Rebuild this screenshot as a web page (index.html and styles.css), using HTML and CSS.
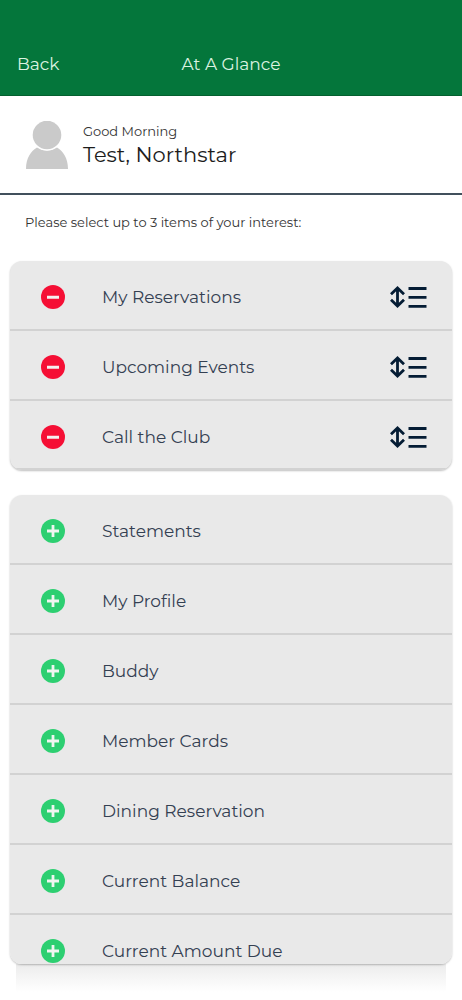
FILE: index.html
```html
<!DOCTYPE html>
<html lang="en">
<head>
  <meta charset="UTF-8" />
  <meta name="viewport" content="width=device-width, initial-scale=1.0">
  <title>At A Glance</title>
  <link rel="stylesheet" href="styles.css">
</head>
<body>
  <!-- shared icons -->
  <svg class="sprite" aria-hidden="true">
    <symbol id="icon-minus" viewBox="0 0 24 24">
      <circle cx="12" cy="12" r="12" fill="#f50f35"/>
      <path d="M6 12.3h12" stroke="#f4f0f0" stroke-width="3"/>
    </symbol>
    <symbol id="icon-plus" viewBox="0 0 24 24">
      <circle cx="12" cy="12" r="12" fill="#2dcf71"/>
      <path d="M6 12h12M12 6v12" stroke="#f0f5f1" stroke-width="2.8"/>
    </symbol>
    <symbol id="icon-sort" viewBox="0 0 38 24">
      <path d="M8.500 4v16M2 9.200L8.500 3l6.500 6.200M2 14.800L8.500 21l6.500-6.200" fill="none" stroke="#041c34" stroke-width="2.800"/>
      <path d="M19.500 3.500h18M19.500 12.300h18M19.500 21.300h18" stroke="#041c34" stroke-width="2.800"/>
    </symbol>
  </svg>

  <header class="top-bar">
    <a href="#" class="back">Back</a>
    <h1>At A Glance</h1>
  </header>

  <section class="user">
    <svg class="avatar" viewBox="0 0 44 48" aria-hidden="true">
      <path d="M1 48C1 37 6 30 12 26.500Q22 33 32 26.500C38 30 43 37 43 48Z" fill="#cacaca"/>
      <circle cx="22" cy="14" r="15.500" fill="#fff"/>
      <circle cx="22" cy="14" r="14.300" fill="#cacaca"/>
    </svg>
    <div>
      <p class="greeting">Good Morning</p>
      <p class="name">Test, Northstar</p>
    </div>
  </section>

  <main>
    <p class="hint">Please select up to 3 items of your interest:</p>

    <ul class="card">
      <li>
        <button aria-label="Remove My Reservations"><svg class="icon"><use href="#icon-minus"/></svg></button>
        <span>My Reservations</span>
        <button aria-label="Move My Reservations"><svg class="sort"><use href="#icon-sort"/></svg></button>
      </li>
      <li>
        <button aria-label="Remove Upcoming Events"><svg class="icon"><use href="#icon-minus"/></svg></button>
        <span>Upcoming Events</span>
        <button aria-label="Move Upcoming Events"><svg class="sort"><use href="#icon-sort"/></svg></button>
      </li>
      <li>
        <button aria-label="Remove Call the Club"><svg class="icon"><use href="#icon-minus"/></svg></button>
        <span>Call the Club</span>
        <button aria-label="Move Call the Club"><svg class="sort"><use href="#icon-sort"/></svg></button>
      </li>
    </ul>

    <ul class="card available">
      <li>
        <button aria-label="Add Statements"><svg class="icon"><use href="#icon-plus"/></svg></button>
        <span>Statements</span>
      </li>
      <li>
        <button aria-label="Add My Profile"><svg class="icon"><use href="#icon-plus"/></svg></button>
        <span>My Profile</span>
      </li>
      <li>
        <button aria-label="Add Buddy"><svg class="icon"><use href="#icon-plus"/></svg></button>
        <span>Buddy</span>
      </li>
      <li>
        <button aria-label="Add Member Cards"><svg class="icon"><use href="#icon-plus"/></svg></button>
        <span>Member Cards</span>
      </li>
      <li>
        <button aria-label="Add Dining Reservation"><svg class="icon"><use href="#icon-plus"/></svg></button>
        <span>Dining Reservation</span>
      </li>
      <li>
        <button aria-label="Add Current Balance"><svg class="icon"><use href="#icon-plus"/></svg></button>
        <span>Current Balance</span>
      </li>
      <li>
        <button aria-label="Add Current Amount Due"><svg class="icon"><use href="#icon-plus"/></svg></button>
        <span>Current Amount Due</span>
      </li>
    </ul>
    <div class="fade"></div>
  </main>
</body>
</html>
```
FILE: styles.css
```css
* {
  box-sizing: border-box;
}
body {
  margin: 0;
  height: 100vh;
  display: flex;
  flex-direction: column;
  background: #fff;
  color: #1c1c1c;
  font-family: Montserrat, Inter, sans-serif;
  font-weight: 400;
}
h1, p, ul {
  margin: 0;
  padding: 0;
}
.sprite {
  display: none;
}
.top-bar {
  display: grid;
  grid-template-columns: 1fr auto 1fr;
  padding: 52px 17px 19px;
  background: #04763b;
  border-bottom: 1px solid #04602f;
  color: #dcf3e1;
  font-size: 17px;
  line-height: 24px;
}
.top-bar h1 {
  font-size: 17px;
  font-weight: 400;
}
.back {
  color: inherit;
  text-decoration: none;
}
.user {
  display: flex;
  gap: 14px;
  padding: 25px 25px 24px;
  border-bottom: 2px solid #41505c;
}
.avatar {
  width: 44px;
  height: 48px;
}
.greeting {
  font-size: 13px;
  line-height: 20px;
  color: #333;
}
.name {
  font-size: 21px;
  line-height: 28px;
}
main {
  flex: 1;
  min-height: 0;
  display: flex;
  flex-direction: column;
  padding: 0 10px 8px;
}
.hint {
  padding: 17px 15px 29px;
  font-size: 13px;
  line-height: 20px;
  color: #333;
}
.card {
  position: relative;
  z-index: 1;
  flex: none;
  list-style: none;
  background: #e9e9e9;
  border-radius: 12px;
  box-shadow: 0 1px 2px rgba(0,0,0,0.25);
  overflow: hidden;
}
.card li {
  display: flex;
  align-items: center;
  height: 70px;
  padding: 4px 25px 0 31px;
  border-bottom: 2px solid #d2d2d2;
}
.card li:last-child {
  height: 69px;
}
.card span {
  flex: 1;
  margin-left: 37px;
  font-size: 17px;
  line-height: 24px;
  color: #344052;
}
.card button {
  padding: 0;
  border: none;
  background: none;
  cursor: pointer;
}
.card svg {
  display: block;
}
.icon {
  width: 24px;
  height: 24px;
}
.sort {
  width: 38px;
  height: 24px;
}
.available {
  flex: 0 1 auto;
  min-height: 0;
  margin-top: 25px;
  overflow-y: auto;
  scrollbar-width: none;
}
.fade {
  flex: none;
  height: 28px;
  margin: 0 6px;
  background: linear-gradient(#ececec, #fff);
}
```
